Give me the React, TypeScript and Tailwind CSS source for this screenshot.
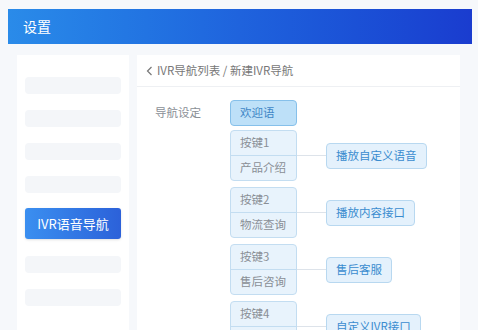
import React from 'react';

const font = { fontFamily: '"Noto Sans CJK SC", "Noto Sans", sans-serif' };

const keys = [
  { key: '按键1', name: '产品介绍', action: '播放自定义语音' },
  { key: '按键2', name: '物流查询', action: '播放内容接口' },
  { key: '按键3', name: '售后咨询', action: '售后客服' },
  { key: '按键4', name: '投诉建议', action: '自定义IVR接口' },
];

const App = () => {
  return (
    <div className="w-[478px] h-[330px] overflow-hidden bg-[#f6f8fb] pt-[9px] px-[8px]" style={font}>
      <div className="h-[35px] w-[464px] flex items-center pl-[15px] text-white text-[14px] bg-gradient-to-r from-[#2a8be9] via-[#1f63dd] to-[#1a3ccf]">
        设置
      </div>

      <div className="flex mt-[11px]">
        {/* sidebar */}
        <div className="ml-[9px] w-[112px] h-[300px] bg-white pt-[22px] px-[8px] flex flex-col gap-[16px]">
          <div className="h-[17px] rounded-sm bg-[#f4f6f9]"></div>
          <div className="h-[17px] rounded-sm bg-[#f4f6f9]"></div>
          <div className="h-[17px] rounded-sm bg-[#f4f6f9]"></div>
          <div className="h-[17px] rounded-sm bg-[#f4f6f9]"></div>
          <div className="h-[31px] -my-[1px] rounded-[3px] bg-gradient-to-r from-[#3b8ff0] to-[#2c61d9] text-white text-[13px] flex items-center justify-center shadow-sm">
            IVR语音导航
          </div>
          <div className="h-[17px] mt-[2px] rounded-sm bg-[#f4f6f9]"></div>
          <div className="h-[17px] rounded-sm bg-[#f4f6f9]"></div>
        </div>

        {/* main */}
        <div className="ml-[8px] w-[323px] h-[300px] bg-white">
          <div className="h-[32px] border-b border-[#eef0f3] flex items-center pl-[9px] text-[11.5px] text-[#777]">
            <svg width="7" height="10" viewBox="0 0 7 10" className="mr-[4px]">
              <path d="M5.5 1 L1.5 5 L5.5 9" fill="none" stroke="#777" strokeWidth="1.2" />
            </svg>
            IVR导航列表 / 新建IVR导航
          </div>

          <div className="flex pt-[13px]">
            <div className="w-[93px] h-[26px] flex items-center pl-[18px] text-[11.5px] text-[#8a8f96]">
              导航设定
            </div>
            <div className="flex flex-col">
              <div className="w-[67px] h-[26px] mb-[4px] rounded-[4px] border border-[#86c0ea] bg-[#bde0f8] flex items-center pl-[9px] text-[11.5px] text-[#3f86c6]">
                欢迎语
              </div>
              <div className="flex flex-col gap-[6px]">
                {keys.map((k) => (
                  <div key={k.key} className="flex items-center">
                    <div className="w-[67px] h-[51px] rounded-[4px] border border-[#c3ddf1] bg-[#e8f3fc] flex flex-col text-[11.5px] text-[#8a8f96]">
                      <div className="flex-1 flex items-center pl-[9px] border-b border-[#c3ddf1]">{k.key}</div>
                      <div className="flex-1 flex items-center pl-[9px]">{k.name}</div>
                    </div>
                    <div className="w-[29px] h-px bg-[#dde3ea]"></div>
                    <div className="h-[26px] px-[9px] rounded-[4px] border border-[#b8d8f0] bg-[#e4f1fc] flex items-center text-[11.5px] text-[#3a8ccf]">
                      {k.action}
                    </div>
                  </div>
                ))}
              </div>
            </div>
          </div>
        </div>
      </div>
    </div>
  );
};

export default App;
